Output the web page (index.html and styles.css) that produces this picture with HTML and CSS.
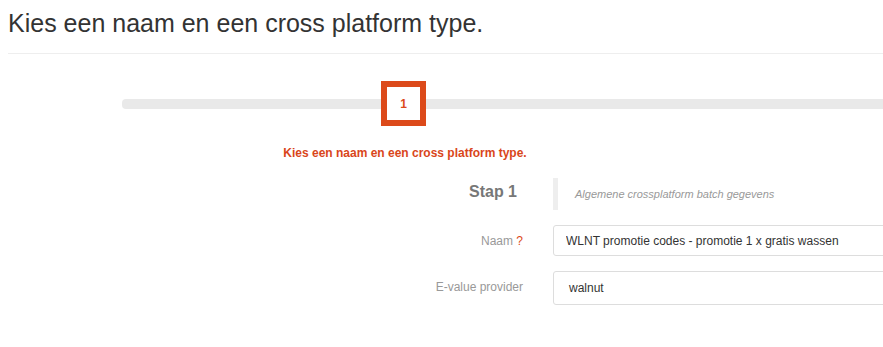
FILE: index.html
```html
<!DOCTYPE html>
<html lang="nl">

<head>
   <meta charset="UTF-8">
   <meta name="viewport" content="width=device-width, initial-scale=1.0">
   <title>Crossplatform batch</title>
   <link rel="stylesheet" href="styles.css">
</head>

<body>
   <div class="page">
       <h2 class="page-title">Kies een naam en een cross platform type.</h2>
       <hr class="divider">

       <!-- Wizard progress -->
       <div class="wizard">
           <div class="wizard-col">
               <div class="step-box">1</div>
               <p class="step-msg">Kies een naam en een cross platform type.</p>
           </div>
       </div>

       <form class="form-horizontal">
           <div class="form-row step-row">
               <div class="step-title">Stap 1</div>
               <div class="step-desc">Algemene crossplatform batch gegevens</div>
           </div>

           <div class="form-row">
               <label class="form-label" for="naam">Naam <span class="req">?</span></label>
               <input class="form-control" type="text" id="naam" value="WLNT promotie codes - promotie 1 x gratis wassen">
           </div>

           <div class="form-row">
               <label class="form-label label-high" for="provider">E-value provider</label>
               <div class="form-control select-like" id="provider">walnut</div>
           </div>
       </form>
   </div>
</body>

</html>
```

FILE: styles.css
```css
body {
    font-family: "Liberation Sans", Arial, sans-serif;
    margin: 0;
    overflow: hidden;
    color: #333;
}

.page {
    width: 920px;
}

.page-title {
    font-size: 25px;
    font-weight: normal;
    margin: 0;
    padding: 9px 0 0 8px;
    height: 46px;
    box-sizing: border-box;
    line-height: 28px;
}

.divider {
    border: 0;
    border-top: 1px solid #eee;
    margin: 7px 0 0 8px;
}

/* Wizard progress */
.wizard {
    position: relative;
    margin-left: 122px;
    margin-top: 27px;
}

.wizard::before {
    content: "";
    position: absolute;
    left: 0;
    right: 0;
    top: 18px;
    height: 10px;
    background-color: #e9e9e9;
    border-radius: 4px 0 0 4px;
}

.wizard-col {
    position: relative;
    width: 566px;
    display: flex;
    flex-direction: column;
    align-items: center;
}

.step-box {
    width: 45px;
    height: 45px;
    box-sizing: border-box;
    border: 6px solid #dc4a1a;
    background: #fff;
    color: #dc4a1a;
    font-weight: bold;
    font-size: 12px;
    display: flex;
    align-items: center;
    justify-content: center;
    margin-left: -3px;
}

.step-msg {
    margin: 20px 0 0;
    color: #d9461b;
    font-weight: bold;
    font-size: 12px;
}

/* Form */
.form-horizontal {
    margin-top: 18px;
}

.form-row {
    display: flex;
    align-items: center;
    margin-bottom: 15px;
}

.step-title {
    width: 553px;
    box-sizing: border-box;
    text-align: right;
    padding-right: 36px;
    padding-bottom: 5px;
    font-size: 16px;
    font-weight: bold;
    color: #777;
}

.step-desc {
    border-left: 5px solid #eee;
    height: 32px;
    line-height: 32px;
    padding-left: 17px;
    font-style: italic;
    font-size: 11px;
    color: #999;
}

.form-label {
    width: 523px;
    box-sizing: border-box;
    text-align: right;
    margin-right: 30px;
    font-size: 12px;
    color: #999;
}

.label-high {
    padding-bottom: 3px;
}

.req {
    color: #dc4a1a;
}

.form-control {
    width: 360px;
    height: 31px;
    box-sizing: border-box;
    border: 1px solid #ddd;
    border-radius: 3px;
    padding: 0 12px;
    font-family: inherit;
    font-size: 12px;
    color: #333;
}

.select-like {
    display: flex;
    align-items: center;
    padding-left: 15px;
    height: 34px;
}
```
